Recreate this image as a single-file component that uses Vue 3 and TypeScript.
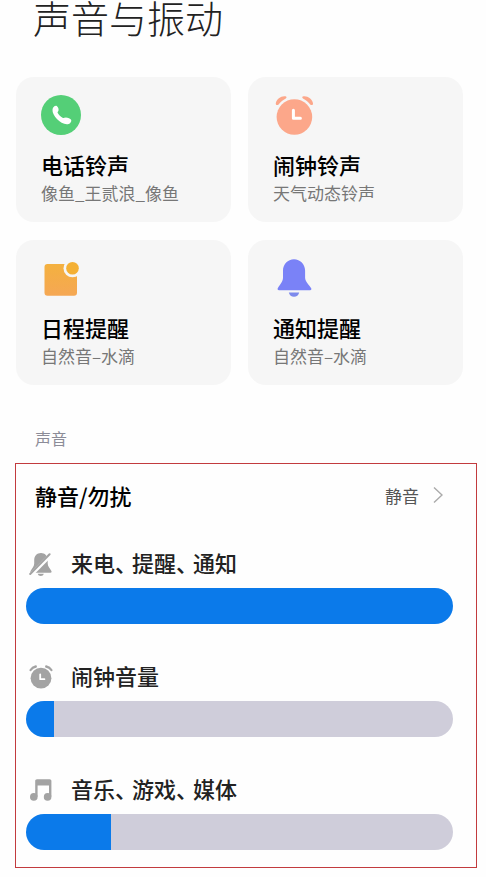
<script setup lang="ts">
import { reactive } from 'vue'

type CardIcon = 'phone' | 'alarm' | 'calendar' | 'bell'
type VolumeIcon = 'muted' | 'alarm' | 'music'

interface SoundCard {
  icon: CardIcon
  title: string
  detail: string
}

interface Volume {
  id: string
  icon: VolumeIcon
  words: string[]
  level: number
}

const MAX_LEVEL = 15

const cards: SoundCard[] = [
  { icon: 'phone', title: '电话铃声', detail: '像鱼_王贰浪_像鱼' },
  { icon: 'alarm', title: '闹钟铃声', detail: '天气动态铃声' },
  { icon: 'calendar', title: '日程提醒', detail: '自然音–水滴' },
  { icon: 'bell', title: '通知提醒', detail: '自然音–水滴' },
]

const volumes = reactive<Volume[]>([
  { id: 'volume-ring', icon: 'muted', words: ['来电', '提醒', '通知'], level: 15 },
  { id: 'volume-alarm', icon: 'alarm', words: ['闹钟音量'], level: 1 },
  { id: 'volume-media', icon: 'music', words: ['音乐', '游戏', '媒体'], level: 3 },
])

const fill = (level: number): string => `${(level / MAX_LEVEL) * 100}%`
</script>

<template>
  <main class="page">
    <h1 class="page-title">声音与振动</h1>

    <section class="cards">
      <button v-for="card in cards" :key="card.title" type="button" class="card">
        <svg v-if="card.icon === 'phone'" class="card-icon" viewBox="0 0 40 40" aria-hidden="true">
          <circle cx="20" cy="20" r="20" fill="#54cf77" />
          <path
            d="M12.2 12.6C12.9 11.1 14.6 10.2 15.8 11C17.1 11.9 17.9 14.1 17.5 15.4C17.2 16.4 16.3 16.8 16.6 17.7C17.6 19.8 19.8 22 22 23C22.9 23.4 23.5 22.6 24.6 22.5C26.6 22.4 29.5 23.5 30.1 24.7C30.9 26.4 29 28.9 26.8 29.2C19.8 30 11 20.6 11.5 14.8C11.6 14 11.8 13.3 12.2 12.6Z"
            fill="#fff"
          />
        </svg>
        <svg v-else-if="card.icon === 'alarm'" class="card-icon" viewBox="0 0 40 40" aria-hidden="true">
          <g fill="#fca78a">
            <circle cx="21.4" cy="22" r="17.8" />
            <path d="M2.8 8.2C3.6 4 8 .8 12.2 1.3C13.8 1.5 14 2.8 12.8 3.4C9.9 4.8 7.8 6.7 5.8 9.2C4.6 10.7 2.5 10.2 2.8 8.2Z" />
            <path d="M40 8.2C39.2 4 34.8 .8 30.6 1.3C29 1.5 28.8 2.8 30 3.4C32.9 4.8 35 6.7 37 9.2C38.2 10.7 40.3 10.2 40 8.2Z" />
          </g>
          <path d="M20.4 15.2V23.2H27.4" fill="none" stroke="#fff" stroke-width="3" stroke-linecap="round" stroke-linejoin="round" />
        </svg>
        <svg v-else-if="card.icon === 'calendar'" class="card-icon" viewBox="0 0 40 40" aria-hidden="true">
          <defs>
            <linearGradient id="calendar-fill" x1="0" y1="0" x2="0" y2="1">
              <stop offset="0" stop-color="#f4b13f" />
              <stop offset="1" stop-color="#f5a754" />
            </linearGradient>
          </defs>
          <rect x="3.5" y="6" width="32.5" height="31.8" rx="3" fill="url(#calendar-fill)" />
          <circle cx="31.5" cy="10.3" r="9" fill="#f6f6f6" />
          <circle cx="31.5" cy="10.3" r="6.3" fill="#f4b034" />
        </svg>
        <svg v-else class="card-icon" viewBox="0 0 40 40" aria-hidden="true">
          <path
            d="M10 12.6C10 6.2 14.8 1.2 21 1.2C27.2 1.2 32.1 6.2 32.1 12.6V19.5C32.1 23.5 35.4 25.8 38 30C38.9 31.2 38.3 32.3 37 32.3H6C4.7 32.3 4.1 31.2 4.9 30C7.3 26.2 10 23.4 10 19.5Z"
            fill="#7a82f7"
          />
          <path d="M15.8 34.6H26.2C25.6 37.4 23.6 38.8 21 38.8C18.4 38.8 16.4 37.4 15.8 34.6Z" fill="#7d8aec" />
        </svg>
        <span class="card-title">{{ card.title }}</span>
        <span class="card-detail">{{ card.detail }}</span>
      </button>
    </section>

    <h2 class="section-label">声音</h2>

    <section class="panel">
      <button type="button" class="mode">
        <span class="mode-name">静音/勿扰</span>
        <span class="mode-value">静音</span>
        <svg class="chevron" viewBox="0 0 10 18" aria-hidden="true">
          <path d="M1 1.5L9 9L1 16.5" fill="none" stroke="#aaa" stroke-width="1.4" />
        </svg>
      </button>

      <div class="volumes">
        <div v-for="volume in volumes" :key="volume.id" class="volume">
          <label class="volume-label" :for="volume.id">
            <svg v-if="volume.icon === 'muted'" class="volume-icon" viewBox="0 0 24 24" aria-hidden="true">
              <path
                d="M5.2 8.2C5.2 3.8 8 1 12 1C15.8 1 18.7 3.8 18.7 8.2V11.5C18.7 14.5 20.8 16.2 22.4 19C22.9 20 22.5 20.7 21.5 20.7H2.5C1.5 20.7 1.1 20 1.6 19C3.2 16.2 5.2 14.5 5.2 11.5Z"
                fill="#a3a3a3"
              />
              <path d="M8.7 21.8H14.8C14.3 23.3 13.3 24 11.8 24C10.2 24 9.2 23.3 8.7 21.8Z" fill="#a3a3a3" />
              <path d="M1.6 23.2L22 2.5" fill="none" stroke="#fefefe" stroke-width="4" />
              <path d="M1.2 22L20.6 2.2" fill="none" stroke="#a3a3a3" stroke-width="2" stroke-linecap="round" />
            </svg>
            <svg v-else-if="volume.icon === 'alarm'" class="volume-icon" viewBox="0 0 24 24" aria-hidden="true">
              <circle cx="12" cy="13.2" r="10.4" fill="#a3a3a3" />
              <path d="M1.6 5Q3.4 2.2 6.8 1.5M22.4 5Q20.6 2.2 17.2 1.5" fill="none" stroke="#a3a3a3" stroke-width="2.3" stroke-linecap="round" />
              <path d="M11.2 9.3V14.2H15.4" fill="none" stroke="#fff" stroke-width="1.8" stroke-linecap="round" stroke-linejoin="round" />
            </svg>
            <svg v-else class="volume-icon" viewBox="0 0 24 24" aria-hidden="true">
              <g fill="#a3a3a3">
                <path d="M6.2 3C6.2 1.9 6.9 1.2 8 1.2H20.6C21.7 1.2 22.4 1.9 22.4 3V18.8H20V7.6H8.6V18.8H6.2Z" />
                <circle cx="4.8" cy="18.9" r="3.8" />
                <circle cx="18.6" cy="18.9" r="3.8" />
              </g>
            </svg>
            <span>
              <template v-for="(word, index) in volume.words" :key="word">
                <span v-if="index > 0" class="separator">、</span>{{ word }}</template>
            </span>
          </label>
          <input
            :id="volume.id"
            v-model.number="volume.level"
            class="slider"
            type="range"
            min="0"
            :max="MAX_LEVEL"
            :style="{ '--fill': fill(volume.level) }"
          />
        </div>
      </div>
    </section>
  </main>
</template>

<style>
body {
  margin: 0;
  background: #fefefe;
}
</style>

<style scoped>
.page {
  padding-bottom: 8px;
  color: #000;
  font-family: "Noto Sans CJK SC", sans-serif;
}

.page-title {
  margin: 0;
  padding: 0 33px;
  color: #222;
  font-size: 38px;
  font-weight: 300;
  line-height: 34px;
}

.cards {
  display: grid;
  grid-template-columns: 1fr 1fr;
  gap: 18px 17px;
  margin: 43px 23px 0 16px;
}

.card {
  display: flex;
  flex-direction: column;
  align-items: flex-start;
  margin: 0;
  padding: 18px 25px 15px;
  border: 0;
  border-radius: 18px;
  background: #f6f6f6;
  color: inherit;
  font-family: inherit;
  text-align: left;
  cursor: pointer;
}

.card-icon {
  width: 40px;
  height: 40px;
  overflow: visible;
}

.card-title {
  margin-top: 14px;
  font-size: 22px;
  font-weight: 500;
  line-height: 30px;
}

.card-detail {
  color: #777;
  font-size: 17px;
  line-height: 28px;
}

.section-label {
  margin: 41px 35px 13px;
  color: #8c8c98;
  font-size: 16px;
  font-weight: 400;
  line-height: 24px;
}

.panel {
  margin: 0 9px 0 15px;
  padding: 11px 23px 17px 10px;
  border: 1px solid #c23b3e;
}

.mode {
  display: flex;
  align-items: center;
  width: 100%;
  height: 40px;
  margin: 0;
  padding: 0 10px 0 9px;
  border: 0;
  background: none;
  color: inherit;
  font-family: inherit;
  text-align: left;
  cursor: pointer;
}

.mode-name {
  flex: 1;
  font-size: 22px;
  font-weight: 500;
}

.mode-value {
  color: #555;
  font-size: 17px;
}

.chevron {
  width: 10px;
  height: 18px;
  margin-left: 14px;
}

.volumes {
  display: grid;
  gap: 35px;
  margin-top: 31px;
}

.volume {
  display: grid;
  gap: 6px;
}

.volume-label {
  display: flex;
  align-items: flex-start;
  gap: 18px;
  height: 36px;
  padding-left: 3px;
  color: #222;
  font-size: 22px;
  font-weight: 500;
  line-height: 32px;
}

.volume-icon {
  width: 24px;
  height: 24px;
  margin-top: 6px;
}

.separator {
  display: inline-block;
  width: 17px;
  font-feature-settings: "halt";
}

.slider {
  display: block;
  width: 100%;
  height: 36px;
  margin: 0;
  border-radius: 18px;
  appearance: none;
  background: linear-gradient(to right, #0b7aea var(--fill), #cfcdda var(--fill));
  cursor: pointer;
}

.slider::-webkit-slider-thumb {
  width: 1px;
  height: 36px;
  appearance: none;
  background: transparent;
}
</style>
